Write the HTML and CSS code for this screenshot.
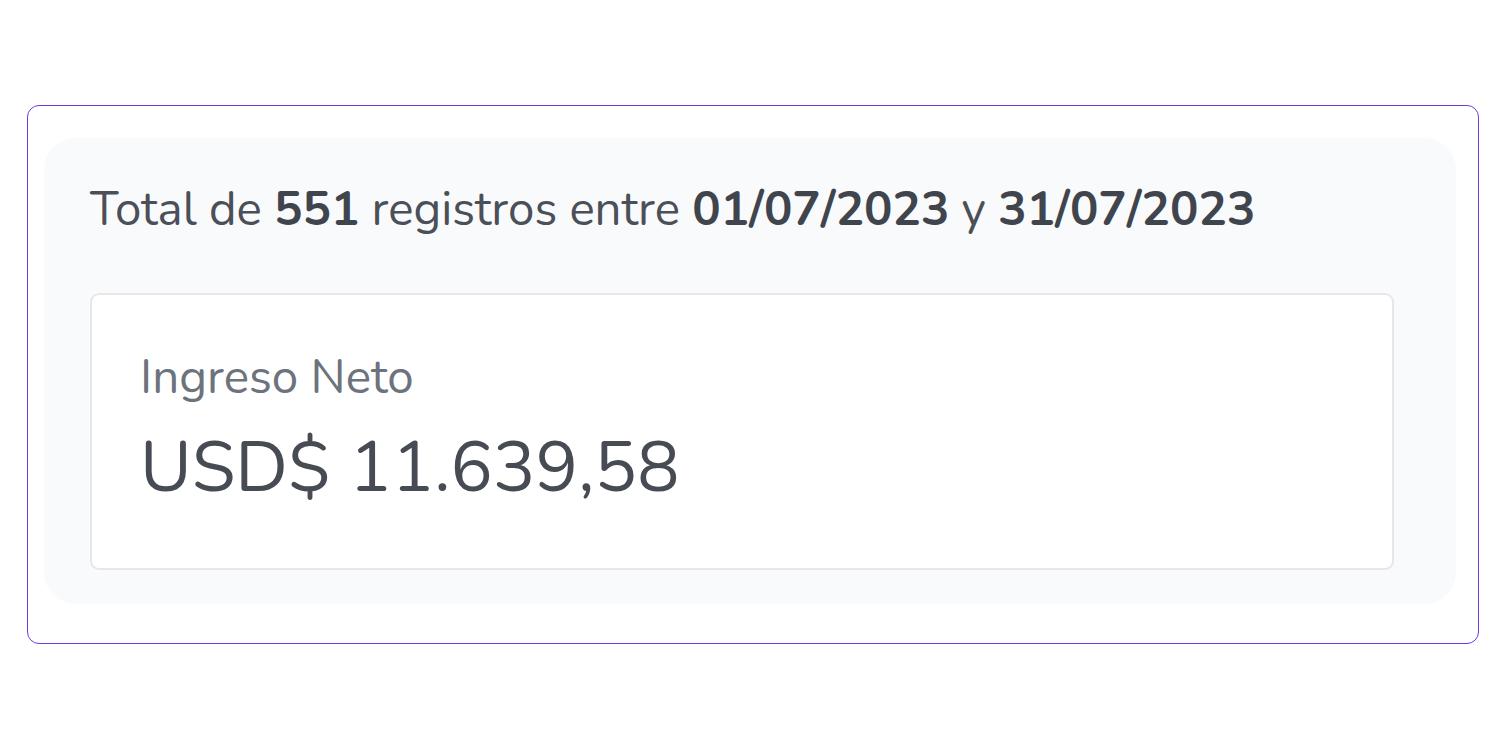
FILE: index.html
```html
<!DOCTYPE html>
<html lang="es">
<head>
<meta charset="utf-8">
<title>Resumen</title>
<link rel="stylesheet" href="styles.css">
</head>
<body>
<div class="frame">
  <section class="panel">
    <p class="summary">Total de <strong>551</strong> registros entre <strong>01/07/2023</strong> y <strong>31/07/2023</strong></p>
    <div class="stat-card">
      <div class="stat-label">Ingreso Neto</div>
      <div class="stat-value">USD$ 11.639,58</div>
    </div>
  </section>
</div>
</body>
</html>
```

FILE: styles.css
```css
html, body {
  margin: 0;
  padding: 0;
  background: #ffffff;
}

body {
  font-family: "Nunito", "Lato", "Noto Sans", sans-serif;
  color: #4b5058;
}

.frame {
  box-sizing: border-box;
  margin: 105px 0 0 27px;
  width: 1452px;
  height: 539px;
  border: 1px solid #6f3bd8;
  border-radius: 12px;
  padding: 32px 22px 0 16px;
}

.panel {
  box-sizing: border-box;
  width: 1412px;
  height: 466px;
  background: #f9fafb;
  border-radius: 32px;
  padding: 40px 62px 0 46px;
  display: flex;
  flex-direction: column;
}

.summary {
  margin: 0;
  font-size: 47.4px;
  line-height: 64px;
  color: #4b5058;
  font-weight: 400;
  white-space: nowrap;
}

.summary strong {
  font-weight: 700;
  color: #40454d;
}

.stat-card {
  box-sizing: border-box;
  margin-top: 51px;
  width: 1304px;
  height: 277px;
  background: #ffffff;
  border: 2px solid #e6e7ea;
  border-radius: 9px;
  padding: 55px 48px 0 48px;
}

.stat-label {
  font-size: 47.5px;
  line-height: 56px;
  color: #6d737c;
}

.stat-value {
  margin-top: 22px;
  font-size: 71px;
  line-height: 80px;
  color: #474c54;
}
```
